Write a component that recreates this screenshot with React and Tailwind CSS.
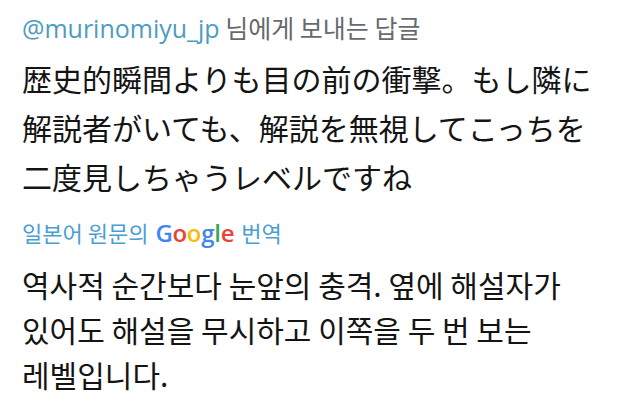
const Google = () => (
  <span className="font-['Open_Sans','Liberation_Sans',sans-serif] font-semibold text-[24px] tracking-[-0.3px] mx-[7px]">
    <span className="text-[#4285f4]">G</span>
    <span className="text-[#ea4335]">o</span>
    <span className="text-[#fbbc05]">o</span>
    <span className="text-[#4285f4]">g</span>
    <span className="text-[#34a853]">l</span>
    <span className="text-[#ea4335]">e</span>
  </span>
);

export default function App() {
  return (
    <div className="w-[640px] h-[416px] bg-white overflow-hidden px-[22px] pt-[9px] font-['Noto_Sans_CJK_KR',sans-serif]">
      {/* reply header */}
      <div className="text-[25px] leading-[36px] text-[#666a6e]">
        <span className="font-['Open_Sans','Noto_Sans_CJK_KR',sans-serif] text-[#4d9cbf]">@murinomiyu_jp</span>{" "}
        님에게 보내는 답글
      </div>

      {/* original tweet */}
      <p className="mt-[8px] text-[30px] leading-[49px] text-[#141414] font-['Noto_Sans_CJK_JP',sans-serif]">
        歴史的瞬間よりも目の前の衝撃。もし隣に
        <br />
        解説者がいても、解説を無視してこっちを
        <br />
        二度見しちゃうレベルですね
      </p>

      {/* translation label */}
      <div className="mt-[15px] flex items-baseline text-[22px] leading-[32px] text-[#4a9ed2]">
        <span>일본어 원문의</span>
        <Google />
        <span>번역</span>
      </div>

      {/* translated text */}
      <p className="mt-[13px] text-[30px] leading-[45px] text-[#141414]">
        역사적 순간보다 눈앞의 충격. 옆에 해설자가
        <br />
        있어도 해설을 무시하고 이쪽을 두 번 보는
        <br />
        레벨입니다.
      </p>
    </div>
  );
}
